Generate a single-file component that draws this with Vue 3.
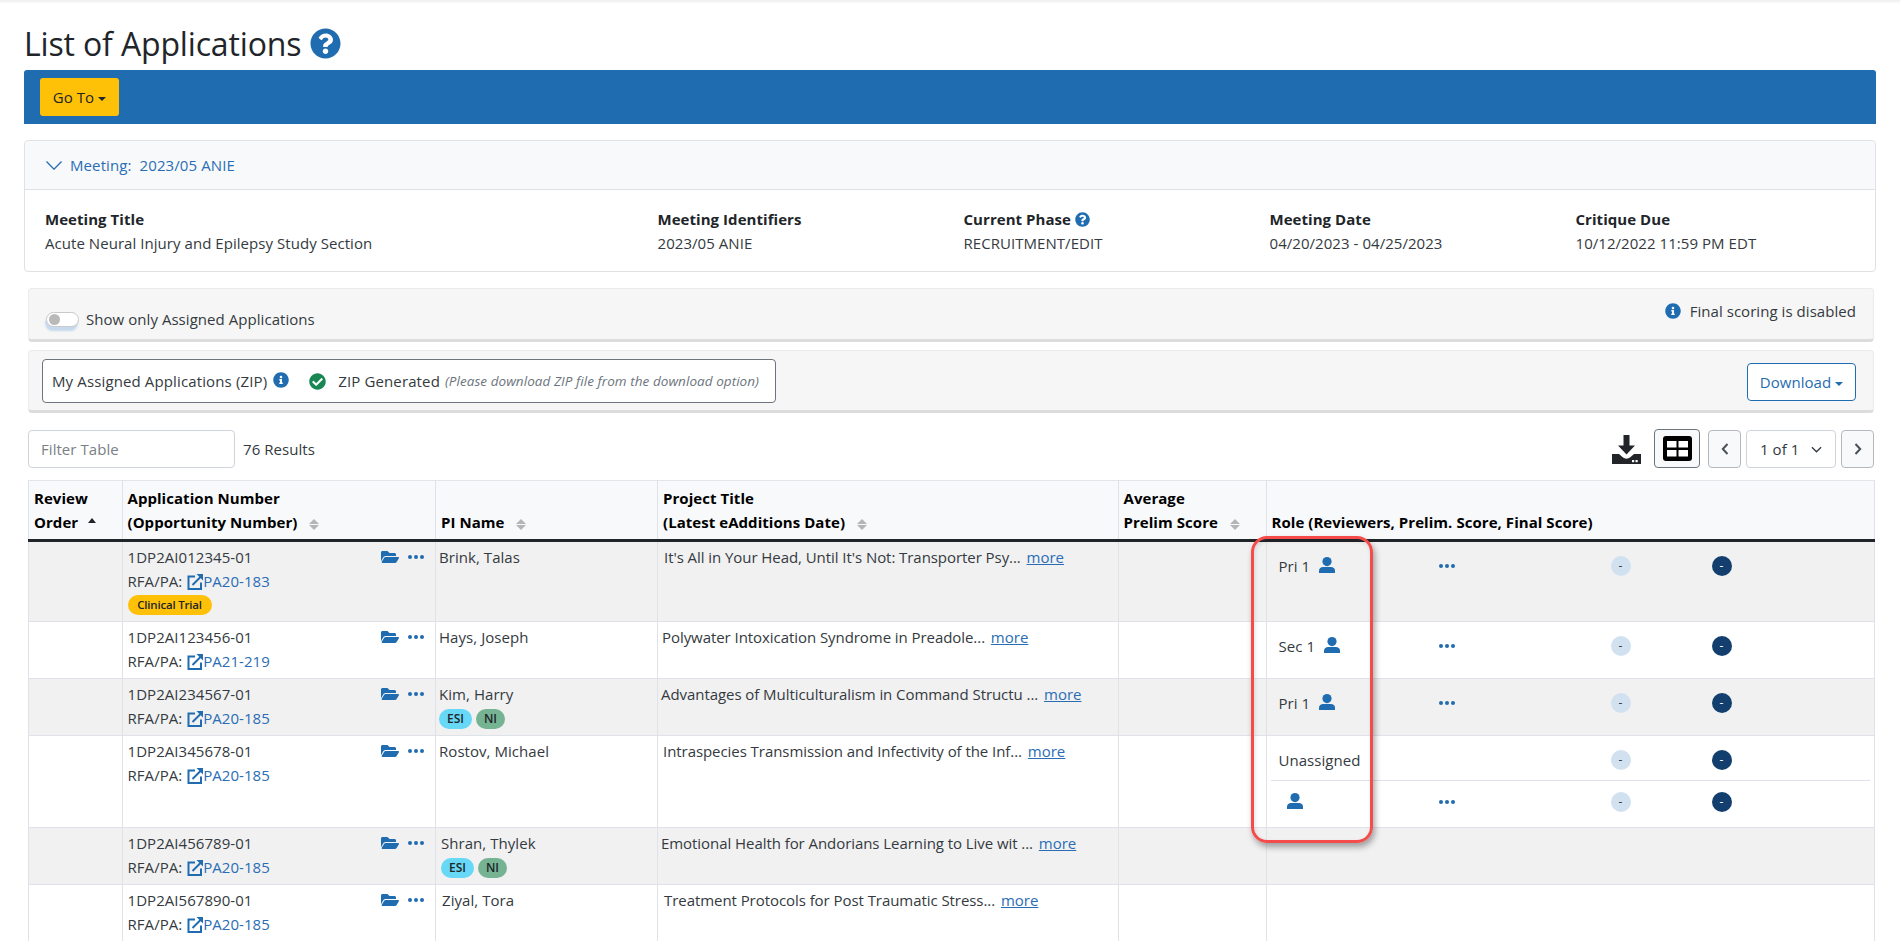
<script setup>
const meetingCols = [
  { label: 'Meeting Title', value: 'Acute Neural Injury and Epilepsy Study Section' },
  { label: 'Meeting Identifiers', value: '2023/05 ANIE' },
  { label: 'Current Phase', value: 'RECRUITMENT/EDIT', help: true },
  { label: 'Meeting Date', value: '04/20/2023 - 04/25/2023' },
  { label: 'Critique Due', value: '10/12/2022 11:59 PM EDT' }
]
const rows = [
  { h: 81, num: '1DP2AI012345-01', pa: 'PA20-183', name: 'Brink, Talas', np: 3, title: "It's All in Your Head, Until It's Not: Transporter Psy...", tp: 6, clinical: true, role: 'Pri 1', person: true },
  { h: 57, num: '1DP2AI123456-01', pa: 'PA21-219', name: 'Hays, Joseph', np: 3, title: 'Polywater Intoxication Syndrome in Preadole...', tp: 4, role: 'Sec 1', person: true },
  { h: 57, num: '1DP2AI234567-01', pa: 'PA20-185', name: 'Kim, Harry', np: 3, badges: true, title: 'Advantages of Multiculturalism in Command Structu ...', tp: 3, role: 'Pri 1', person: true },
  { h: 92, num: '1DP2AI345678-01', pa: 'PA20-185', name: 'Rostov, Michael', np: 3, title: 'Intraspecies Transmission and Infectivity of the Inf...', tp: 5, role: 'Unassigned', split: true },
  { h: 57, num: '1DP2AI456789-01', pa: 'PA20-185', name: 'Shran, Thylek', np: 5, badges: true, title: 'Emotional Health for Andorians Learning to Live wit ...', tp: 3 },
  { h: 57, num: '1DP2AI567890-01', pa: 'PA20-185', name: 'Ziyal, Tora', np: 6, title: 'Treatment Protocols for Post Traumatic Stress...', tp: 6 }
]
const question = 'M504 256c0 136.997-111.043 248-248 248S8 392.997 8 256C8 119.083 119.043 8 256 8s248 111.083 248 248zM262.655 90c-54.497 0-89.255 22.957-116.549 63.758-3.536 5.286-2.353 12.415 2.715 16.258l34.699 26.31c5.205 3.947 12.621 3.008 16.665-2.122 17.864-22.658 30.113-35.797 57.303-35.797 20.429 0 45.698 13.148 45.698 32.958 0 14.976-12.363 22.667-32.534 33.976C247.128 238.528 216 254.941 216 296v4c0 6.627 5.373 12 12 12h56c6.627 0 12-5.373 12-12v-1.333c0-28.462 83.186-29.647 83.186-106.667 0-58.002-60.165-102-116.531-102zM256 338c-25.365 0-46 20.635-46 46 0 25.364 20.635 46 46 46s46-20.636 46-46c0-25.365-20.635-46-46-46z'
const info = 'M256 8C119.043 8 8 119.083 8 256c0 136.997 111.043 248 248 248s248-111.003 248-248C504 119.083 392.957 8 256 8zm0 110c23.196 0 42 18.804 42 42s-18.804 42-42 42-42-18.804-42-42 18.804-42 42-42zm56 254c0 6.627-5.373 12-12 12h-88c-6.627 0-12-5.373-12-12v-24c0-6.627 5.373-12 12-12h12v-64h-12c-6.627 0-12-5.373-12-12v-24c0-6.627 5.373-12 12-12h64c6.627 0 12 5.373 12 12v100h12c6.627 0 12 5.373 12 12v24z'
const check = 'M504 256c0 136.967-111.033 248-248 248S8 392.967 8 256 119.033 8 256 8s248 111.033 248 248zM227.314 387.314l184-184c6.248-6.248 6.248-16.379 0-22.627l-22.627-22.627c-6.248-6.249-16.379-6.249-22.628 0L216 308.118l-70.059-70.059c-6.248-6.248-16.379-6.248-22.628 0l-22.627 22.627c-6.248 6.248-6.248 16.379 0 22.627l104 104c6.249 6.249 16.379 6.249 22.628.001z'
const folder = 'M572.694 292.093L500.27 416.248A63.997 63.997 0 0 1 444.989 448H45.025c-18.523 0-30.064-20.093-20.731-36.093l72.424-124.155A64 64 0 0 1 152 256h399.964c18.523 0 30.064 20.093 20.73 36.093zM152 224h328v-48c0-26.51-21.49-48-48-48H272l-64-64H48C21.49 64 0 85.49 0 112v278.046l69.077-118.418C86.214 242.25 117.989 224 152 224z'
</script>

<template>
  <div class="page">
    <div class="top-shade"></div>
    <header class="title-row">
      <h1>List of Applications</h1>
      <svg class="ic-title" viewBox="0 0 512 512"><path :d="question" /></svg>
    </header>

    <nav class="action-bar">
      <button class="goto">Go To<span class="caret"></span></button>
    </nav>

    <section class="meeting">
      <div class="meeting-head">
        <svg class="chev" viewBox="0 0 16 9"><polyline points="0.5,0.5 8,8.2 15.5,0.5" /></svg>
        <span>Meeting:&nbsp; 2023/05 ANIE</span>
      </div>
      <div class="meeting-body">
        <div v-for="c in meetingCols" :key="c.label">
          <div class="m-label">{{ c.label }}
            <svg v-if="c.help" class="ic-help" viewBox="0 0 512 512"><path :d="question" /></svg>
          </div>
          <div class="m-value">{{ c.value }}</div>
        </div>
      </div>
    </section>

    <section class="panel panel-toggle">
      <label class="toggle-wrap">
        <span class="toggle"><span class="knob"></span></span>
        <span>Show only Assigned Applications</span>
      </label>
      <div class="final-note">
        <svg class="ic-info" viewBox="0 0 512 512"><path :d="info" /></svg>
        <span>Final scoring is disabled</span>
      </div>
    </section>

    <section class="panel panel-zip">
      <div class="zip-box">
        <span>My Assigned Applications (ZIP)</span>
        <svg class="ic-info zip-info" viewBox="0 0 512 512"><path :d="info" /></svg>
        <svg class="ic-check" viewBox="0 0 512 512"><path :d="check" /></svg>
        <span class="zip-gen">ZIP Generated</span>
        <em>(Please download ZIP file from the download option)</em>
      </div>
      <button class="download">Download<span class="caret"></span></button>
    </section>

    <section class="toolbar">
      <input class="filter" placeholder="Filter Table" />
      <span class="results">76 Results</span>
      <div class="tools">
        <svg class="ic-dl" viewBox="0 0 29 29">
          <path d="M11.5 0h6v10.5h5.5L14.500 19.500 6 10.500h5.500z" />
          <path d="M0 19h7l4 3.500c2 1.500 5 1.500 7 0l4-3.500h7v10H0z" />
          <rect x="20" y="25" width="2.200" height="2.200" fill="#fff" />
          <rect x="23.500" y="25" width="2.200" height="2.200" fill="#fff" />
        </svg>
        <button class="tbl-btn">
          <svg viewBox="0 0 29 25">
            <rect width="29" height="25" rx="3" fill="#000" />
            <rect x="4" y="5" width="9.500" height="6.500" fill="#fff" />
            <rect x="15.500" y="5" width="9.500" height="6.500" fill="#fff" />
            <rect x="4" y="14" width="9.500" height="6.500" fill="#fff" />
            <rect x="15.500" y="14" width="9.500" height="6.500" fill="#fff" />
          </svg>
        </button>
        <button class="pg-btn">
          <svg viewBox="0 0 8 12"><polyline points="6.500,1 1.800,6 6.500,11" /></svg>
        </button>
        <div class="pg-select">
          <span>1 of 1</span>
          <svg viewBox="0 0 12 7"><polyline points="1,1 6,6 11,1" /></svg>
        </div>
        <button class="pg-btn">
          <svg viewBox="0 0 8 12"><polyline points="1.500,1 6.200,6 1.500,11" /></svg>
        </button>
      </div>
    </section>

    <div class="table-wrap">
      <table>
        <colgroup>
          <col class="c1" /><col class="c2" /><col class="c3" /><col class="c4" /><col class="c5" /><col class="c6" />
        </colgroup>
        <thead>
          <tr>
            <th>Review<br />Order <span class="sort-up"></span></th>
            <th>Application Number<br />(Opportunity Number) <span class="sort"><i></i><b></b></span></th>
            <th>PI Name <span class="sort"><i></i><b></b></span></th>
            <th>Project Title<br />(Latest eAdditions Date) <span class="sort"><i></i><b></b></span></th>
            <th>Average<br />Prelim Score <span class="sort"><i></i><b></b></span></th>
            <th>Role (Reviewers, Prelim. Score, Final Score)</th>
          </tr>
        </thead>
        <tbody>
          <tr v-for="r in rows" :key="r.num" :style="{ height: r.h + 'px' }">
            <td></td>
            <td class="app">
              <div class="app-line">
                <span>{{ r.num }}</span>
                <span class="app-icons">
                  <svg class="ic-folder" viewBox="0 0 576 512"><path :d="folder" /></svg>
                  <svg class="ic-dots" viewBox="0 0 16 4"><circle cx="2" cy="2" r="2" /><circle cx="8" cy="2" r="2" /><circle cx="14" cy="2" r="2" /></svg>
                </span>
              </div>
              <div class="rfa">RFA/PA:
                <a class="pa">
                  <svg class="ic-ext" viewBox="0 0 16 16">
                    <path class="ext-box" d="M8 2.500H1.500v12.500H14V8.500" />
                    <path class="ext-arrow" d="M5.500 11 14 2.500" />
                    <path d="M9.500 0H16v6.500z" />
                  </svg>PA{{ r.pa.slice(2) }}</a>
              </div>
              <span v-if="r.clinical" class="pill-ct">Clinical Trial</span>
            </td>
            <td class="pi" :style="{ paddingLeft: r.np + 'px' }">
              <div>{{ r.name }}</div>
              <div v-if="r.badges" class="badges"><span class="esi">ESI</span><span class="ni">NI</span></div>
            </td>
            <td class="proj" :style="{ paddingLeft: r.tp + 'px' }">
              {{ r.title }} <a class="more">more</a>
            </td>
            <td></td>
            <td class="role">
              <div v-if="r.role" class="role-line" :class="{ 'has-split': r.split }">
                <span class="role-name">{{ r.role }}
                  <svg v-if="r.person" class="ic-user" viewBox="0 0 16 16"><circle cx="8" cy="4.600" r="4.600" /><path d="M0 16v-2.500C0 11.200 2 10 4 10h8c2 0 4 1.200 4 3.500V16z" /></svg>
                </span>
                <span class="dots-cell">
                  <svg v-if="r.person" class="ic-dots" viewBox="0 0 16 4"><circle cx="2" cy="2" r="2" /><circle cx="8" cy="2" r="2" /><circle cx="14" cy="2" r="2" /></svg>
                </span>
                <span class="dot-light">-</span>
                <span class="dot-dark">-</span>
              </div>
              <div v-if="r.split" class="role-line sub">
                <span class="role-name">
                  <svg class="ic-user un" viewBox="0 0 16 16"><circle cx="8" cy="4.600" r="4.600" /><path d="M0 16v-2.500C0 11.200 2 10 4 10h8c2 0 4 1.200 4 3.500V16z" /></svg>
                </span>
                <span class="dots-cell">
                  <svg class="ic-dots" viewBox="0 0 16 4"><circle cx="2" cy="2" r="2" /><circle cx="8" cy="2" r="2" /><circle cx="14" cy="2" r="2" /></svg>
                </span>
                <span class="dot-light">-</span>
                <span class="dot-dark">-</span>
              </div>
            </td>
          </tr>
        </tbody>
      </table>
      <div class="annotation"></div>
    </div>
  </div>
</template>

<style>
html, body { margin: 0; overflow: hidden; background: #fff; }
</style>

<style scoped>
.page {
  width: 1900px;
  height: 941px;
  box-sizing: border-box;
  padding: 0 24px;
  overflow: hidden;
  font-family: "Open Sans", "Noto Sans", sans-serif;
  font-size: 15px;
  letter-spacing: 0.05px;
  line-height: 24px;
  color: #343a40;
}
.top-shade { height: 3px; margin: 0 -24px; background: linear-gradient(#eeeeee, #fafafa); }
.title-row { height: 67px; box-sizing: border-box; display: flex; align-items: center; padding-top: 14px; }
h1 { margin: 0; font-size: 32px; font-weight: 400; color: #212529; letter-spacing: -0.15px; line-height: 40px; }
.ic-title { width: 31px; height: 31px; margin-left: 9px; fill: #1f6cb0; }
.action-bar { height: 54px; box-sizing: border-box; padding: 8px 16px; background: #1f6cb0; border-radius: 3px 3px 0 0; }
.goto { width: 79px; height: 38px; border: 0; border-radius: 3px; background: #ffc107; color: #212529; font: inherit; letter-spacing: inherit; padding: 0; }
.caret { display: inline-block; margin-left: 4px; vertical-align: 2px; border-top: 4.500px solid currentColor; border-left: 4px solid transparent; border-right: 4px solid transparent; }

.meeting { margin-top: 16px; height: 132px; box-sizing: border-box; border: 1px solid #dfe1e5; border-radius: 4px; }
.meeting-head { height: 49px; box-sizing: border-box; border-bottom: 1px solid #dfe1e5; background: #f8f9fa; display: flex; align-items: center; padding-left: 21px; color: #2a6db5; border-radius: 4px 4px 0 0; letter-spacing: 0.1px; }
.chev { width: 16px; height: 9px; margin-right: 8px; fill: none; stroke: #2a6db5; stroke-width: 1.300; }
.meeting-body { display: grid; grid-template-columns: 612.500px repeat(4, 306px); padding: 17px 0 0 20px; }
.m-label { font-weight: 700; color: #212529; display: flex; align-items: center; gap: 4px; }
.m-value { color: #343a40; }
.ic-help { width: 15px; height: 15px; fill: #1f6cb0; }

.panel { margin-left: 4px; margin-right: 2px; box-sizing: border-box; background: #f6f6f6; border: 1px solid #ebebeb; border-bottom: 3px solid #dcdcdc; border-radius: 4px; display: flex; justify-content: space-between; }
.panel-toggle { margin-top: 16px; height: 54px; padding: 0 17px 0 17px; }
.panel-zip { margin-top: 8px; height: 63px; padding: 8px 17px 0 13px; }
.toggle-wrap { display: flex; align-items: center; gap: 7px; margin-top: 18px; height: 24px; }
.toggle { width: 33px; height: 15px; box-sizing: border-box; border: 1px solid #c9c9c9; background: #fff; border-radius: 8px; box-shadow: -1px 4px 2px #c5d8ec; display: flex; align-items: center; padding-left: 2px; }
.knob { width: 11px; height: 11px; border-radius: 50%; background: #b9b9b9; }
.final-note { display: flex; align-items: center; gap: 9px; height: 24px; margin-top: 10px; padding-right: 0; }
.ic-info { width: 16px; height: 16px; fill: #1f6cb0; }

.zip-box { width: 734px; height: 44px; box-sizing: border-box; border: 1px solid #6c757d; border-radius: 4px; background: #fff; display: flex; align-items: center; padding-left: 9px; letter-spacing: 0.13px; }
.zip-info { margin-left: 6px; margin-top: -3px; }
.ic-check { width: 17px; height: 17px; margin-left: 20px; fill: #198754; }
.zip-gen { margin-left: 12px; }
.zip-box em { margin-left: 5px; font-size: 13.500px; color: #6c757d; letter-spacing: 0.05px; }
.download { width: 109px; height: 38px; margin-top: 4px; border: 1px solid #1f6cb0; border-radius: 4px; background: #fff; color: #1f6cb0; font: inherit; letter-spacing: inherit; padding: 0; }

.toolbar { margin: 17px 2px 0 4px; height: 38px; display: flex; align-items: center; }
.filter { width: 207px; height: 38px; box-sizing: border-box; border: 1px solid #ced4da; border-radius: 4px; padding: 0 12px; font: inherit; letter-spacing: inherit; color: #343a40; outline: none; }
.filter::placeholder { color: #7a7f85; opacity: 1; }
.results { margin-left: 8px; }
.tools { margin-left: auto; display: flex; align-items: center; }
.ic-dl { width: 29px; height: 29px; fill: #212529; margin-right: 13px; }
.tbl-btn { width: 46px; height: 39px; box-sizing: border-box; margin-top: -1px; border: 1px solid #6c757d; border-radius: 4px; background: #f8f9fa; padding: 0; display: flex; align-items: center; justify-content: center; }
.tbl-btn svg { width: 29px; height: 25px; }
.pg-btn { width: 33px; height: 38px; box-sizing: border-box; margin-left: 8px; border: 1px solid #b4b8bd; border-radius: 4px; background: #f8f9fa; padding: 0; display: flex; align-items: center; justify-content: center; }
.pg-btn svg { width: 8px; height: 12px; fill: none; stroke: #495057; stroke-width: 2; }
.pg-select { width: 90px; height: 38px; box-sizing: border-box; margin-left: 5px; border: 1px solid #ced4da; border-radius: 4px; display: flex; align-items: center; padding-left: 13px; gap: 12px; }
.pg-select + .pg-btn { margin-left: 5px; }
.pg-select svg { width: 11px; height: 7px; fill: none; stroke: #343a40; stroke-width: 1.400; }

.table-wrap { position: relative; margin: 12px 2px 0 4px; }
table { width: 1846px; table-layout: fixed; border-collapse: collapse; }
.c1 { width: 93.500px; }
.c2 { width: 313.500px; }
.c3 { width: 222px; }
.c4 { width: 460.500px; }
.c5 { width: 148px; }
.c6 { width: 608.500px; }
th, td { border: 1px solid #dfe2e8; padding: 0; box-sizing: border-box; }
th { height: 60px; vertical-align: bottom; text-align: left; padding: 5px 4px 5px 5px; background: #f8f9fb; color: #000; font-weight: 700; border-top: 1px solid #e3e5e9; border-bottom: 3px solid #212529; }
td { vertical-align: top; }
tbody tr:nth-child(odd) td { background: #f1f1f2; }

.sort-up { display: inline-block; margin-left: 6px; vertical-align: 5px; border-bottom: 5px solid #212529; border-left: 4px solid transparent; border-right: 4px solid transparent; }
.sort { display: inline-flex; flex-direction: column; gap: 1px; margin-left: 8px; vertical-align: 4px; }
.sort i, .sort b { display: block; border-left: 5px solid transparent; border-right: 5px solid transparent; }
.sort i { border-bottom: 5.500px solid #b5b5b5; }
.sort b { border-top: 5.500px solid #b5b5b5; }

.app { padding: 3px 11px 0 5px; }
.app-line { display: flex; justify-content: space-between; align-items: center; }
.app-icons { display: flex; align-items: center; gap: 9px; margin-top: -1px; }
.ic-folder { width: 18px; height: 16px; fill: #1f6cb0; }
.ic-dots { width: 16px; height: 4px; fill: #1f6cb0; display: block; }
.pa { color: #2a6db5; }
.ic-ext { width: 16px; height: 16px; vertical-align: -3px; fill: #1f6cb0; margin-left: 1px; }
.ext-box, .ext-arrow { fill: none; stroke: #1f6cb0; stroke-width: 2; }
.pill-ct { display: block; width: 84px; height: 20px; margin-top: 2px; border-radius: 10px; background: #ffc107; color: #212529; font-size: 11.500px; font-weight: 600; line-height: 20px; text-align: center; letter-spacing: -0.2px; }

.pi { padding-top: 3px; }
.badges { display: flex; gap: 4px; margin-top: 3px; margin-left: 0; }
.badges span { height: 20px; border-radius: 10px; text-align: center; font-size: 12px; font-weight: 600; line-height: 20px; color: #212529; }
.esi { width: 33px; background: #67d8f5; }
.ni { width: 29px; background: #75b393; }

.proj { padding-top: 3px; letter-spacing: -0.06px; }
.more { color: #2a6db5; text-decoration: underline; margin-left: 2px; letter-spacing: 0; }

.role-line { display: grid; grid-template-columns: 160px 172px 101px 1fr; align-items: center; padding: 0 0 0 12px; box-sizing: border-box; height: 48px; }
.role-line.has-split { height: 45px; padding-top: 4px; border-bottom: 1px solid #dfe2e8; margin: 0 4px; padding-left: 8px; }
.role-line.sub { height: 42px; padding-bottom: 0; margin-top: 0; }
.role-name { display: flex; align-items: center; gap: 9px; }
.ic-user { width: 16px; height: 16px; fill: #1f6cb0; margin-top: -2px; }
.ic-user.un { margin-left: 8px; }
.dot-light, .dot-dark { width: 20px; height: 20px; border-radius: 50%; font-size: 12px; line-height: 19px; text-align: center; }
.dot-light { background: #d2e1f0; color: #343a40; }
.dot-dark { background: #123f6d; color: #fff; }

.annotation { position: absolute; left: 1223px; top: 56px; width: 122px; height: 307px; box-sizing: border-box; border: 3px solid #f64b4b; border-radius: 16px; box-shadow: 2px 4px 6px rgba(0, 0, 0, 0.35), inset 1px 2px 4px rgba(0, 0, 0, 0.12); pointer-events: none; }
</style>
